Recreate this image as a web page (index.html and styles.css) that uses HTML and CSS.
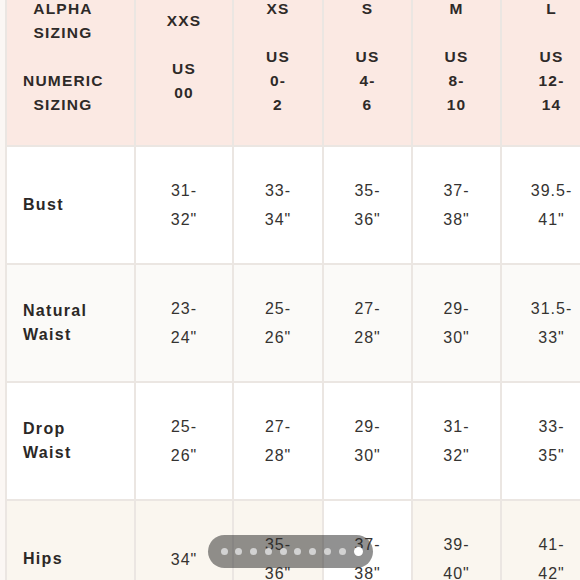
FILE: index.html
```html
<!DOCTYPE html>
<html>
<head>
<meta charset="utf-8">
<link rel="stylesheet" href="styles.css">
</head>
<body>
<table class="chart">
  <thead>
    <tr>
      <th class="corner">ALPHA<br>SIZING<br><br>NUMERIC<br>SIZING</th>
      <th class="c-xxs">XXS<br><br>US<br>00</th>
      <th class="c-xs">XS<br><br>US<br>0-<br>2</th>
      <th class="c-s">S<br><br>US<br>4-<br>6</th>
      <th class="c-m">M<br><br>US<br>8-<br>10</th>
      <th class="c-l">L<br><br>US<br>12-<br>14</th>
    </tr>
  </thead>
  <tbody>
    <tr class="row-white">
      <td class="label">Bust</td>
      <td>31-<br>32"</td>
      <td>33-<br>34"</td>
      <td>35-<br>36"</td>
      <td>37-<br>38"</td>
      <td>39.5-<br>41"</td>
    </tr>
    <tr class="row-soft">
      <td class="label">Natural<br>Waist</td>
      <td>23-<br>24"</td>
      <td>25-<br>26"</td>
      <td>27-<br>28"</td>
      <td>29-<br>30"</td>
      <td>31.5-<br>33"</td>
    </tr>
    <tr class="row-white">
      <td class="label">Drop<br>Waist</td>
      <td>25-<br>26"</td>
      <td>27-<br>28"</td>
      <td>29-<br>30"</td>
      <td>31-<br>32"</td>
      <td>33-<br>35"</td>
    </tr>
    <tr class="row-cream">
      <td class="label">Hips</td>
      <td>34"</td>
      <td>35-<br>36"</td>
      <td class="cell-white">37-<br>38"</td>
      <td>39-<br>40"</td>
      <td>41-<br>42"</td>
    </tr>
  </tbody>
</table>
<div class="pager">
  <span class="dot"></span><span class="dot"></span><span class="dot"></span><span class="dot"></span><span class="dot"></span><span class="dot"></span><span class="dot"></span><span class="dot"></span><span class="dot"></span><span class="dot active"></span>
</div>
</body>
</html>
```

FILE: styles.css
```css
html, body {
  margin: 0;
  padding: 0;
  overflow: hidden;
  width: 580px;
  height: 580px;
}
body {
  background: #fbf7f4;
  font-family: "Liberation Sans", Arial, sans-serif;
  color: #2f2b29;
  position: relative;
}
.chart {
  border-collapse: separate;
  border-spacing: 2px;
  background: #ebe6e2;
  margin-top: -33px;
  margin-left: 5px;
  table-layout: fixed;
  width: 598px;
}
.chart th {
  background: #fbe9e3;
  font-weight: 700;
  font-size: 15.5px;
  letter-spacing: 1.2px;
  line-height: 24px;
  padding: 28px 0;
  text-align: center;
  vertical-align: middle;
  color: #2e2a28;
}
.chart th.corner {
  padding-left: 16px;
  padding-right: 31px;
  width: 80px;
}
.c-xxs { width: 96px; }
.c-xs { width: 88px; }
.c-s { width: 87px; }
.c-m { width: 87px; }
.c-l { width: 99px; }
.chart td {
  height: 116px;
  padding: 0;
  text-align: center;
  vertical-align: middle;
  font-size: 16px;
  line-height: 29px;
  letter-spacing: 1px;
  color: #353331;
}
.chart td.label {
  text-align: left;
  padding-left: 16px;
  font-weight: 700;
  line-height: 24px;
  letter-spacing: 1.3px;
  color: #2b2826;
}
.row-white td { background: #ffffff; }
.row-soft td { background: #fbfaf8; }
.row-cream td { background: #faf6ef; }
.row-cream td.cell-white { background: #ffffff; }
.pager {
  position: absolute;
  left: 208px;
  top: 535px;
  width: 165px;
  height: 33px;
  border-radius: 17px;
  background: rgba(45, 45, 45, 0.52);
  display: flex;
  align-items: center;
  gap: 7.8px;
  padding-left: 12.5px;
  box-sizing: border-box;
}
.dot {
  width: 7px;
  height: 7px;
  border-radius: 50%;
  background: #d2d2d2;
  flex: none;
}
.dot.active {
  width: 9px;
  height: 9px;
  background: #ffffff;
}
```
